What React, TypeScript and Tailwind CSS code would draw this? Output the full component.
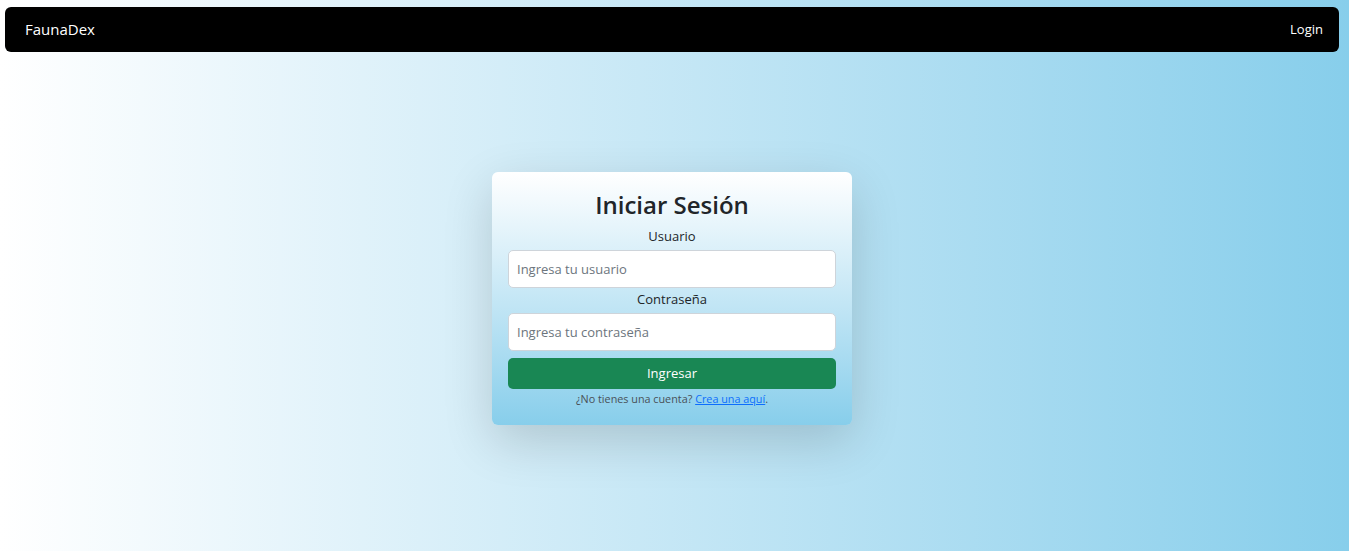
import React from "react";

export default function App() {
  return (
    <div
      className="h-[551px] w-full overflow-hidden bg-gradient-to-r from-[#ffffff] to-[#87ceeb] pt-[7px] pl-[5px] pr-[10px] flex flex-col"
      style={{ fontFamily: '"Open Sans", "Noto Sans", sans-serif' }}
    >
      <nav className="h-[45px] bg-black rounded-[6px] flex items-center justify-between pl-[20px] pr-[16px] shrink-0">
        <span className="text-white text-[15px]">FaunaDex</span>
        <span className="text-white text-[13px]">Login</span>
      </nav>
      <main className="flex-1 flex items-start justify-center pt-[120px]">
        <div className="w-[360px] rounded-[6px] bg-gradient-to-b from-[#ffffff] to-[#87ceeb] px-4 pt-[16px] pb-[18px] shadow-[0_16px_50px_rgba(0,0,0,0.16)] flex flex-col items-center">
          <h2 className="text-[24px] font-semibold text-[#212529] leading-[33px]">Iniciar Sesión</h2>
          <label className="mt-[5px] text-[13px] text-[#212529] leading-[20px]">Usuario</label>
          <input
            className="mt-[4px] w-full h-[38px] rounded-[5px] border border-[#ced4da] bg-white px-[8px] text-[13px] text-[#212529] placeholder:text-[#6c757d] outline-none"
            placeholder="Ingresa tu usuario"
          />
          <label className="mt-[1px] text-[13px] text-[#212529] leading-[20px]">Contraseña</label>
          <input
            type="password"
            className="mt-[4px] w-full h-[38px] rounded-[5px] border border-[#ced4da] bg-white px-[8px] text-[13px] text-[#212529] placeholder:text-[#6c757d] outline-none"
            placeholder="Ingresa tu contraseña"
          />
          <button className="mt-[7px] w-full h-[31px] rounded-[5px] bg-[#198754] text-white text-[13px]">
            Ingresar
          </button>
          <p className="mt-[2px] text-[10.8px] text-[#495057] leading-[16px]">
            ¿No tienes una cuenta?{" "}
            <a className="text-[#0d6efd] underline" href="#">
              Crea una aquí
            </a>
            .
          </p>
        </div>
      </main>
    </div>
  );
}
